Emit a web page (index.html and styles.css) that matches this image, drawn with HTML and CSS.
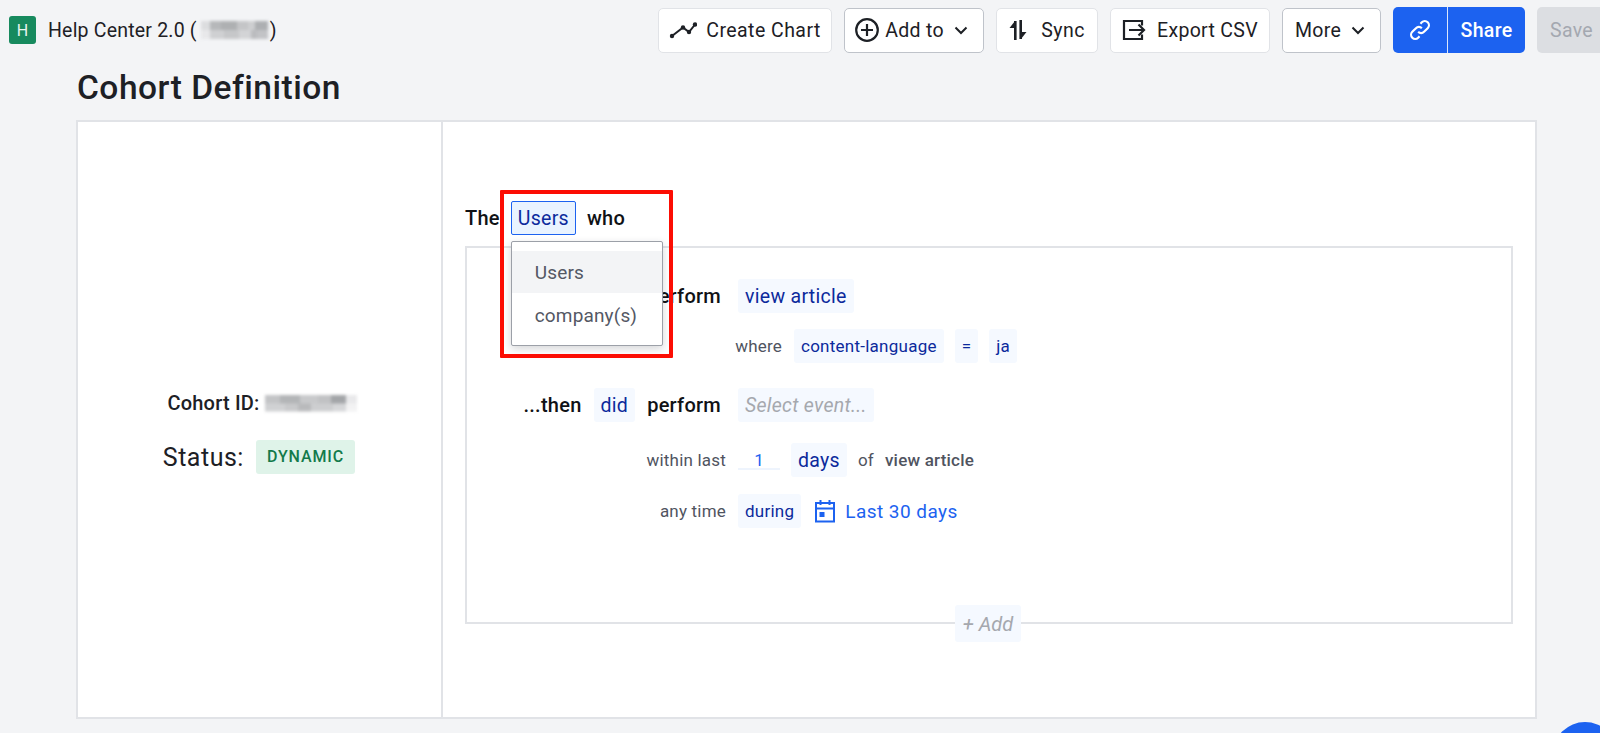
FILE: index.html
```html
<!DOCTYPE html>
<html lang="en">
<head>
<meta charset="utf-8">
<title>Cohort Definition</title>
<link rel="stylesheet" href="styles.css">
</head>
<body>
<header class="topbar">
  <div class="project">
    <span class="logo">H</span>
    <span class="project-name">Help Center 2.0 (<span class="redact redact-a"></span>)</span>
  </div>
  <nav class="actions">
    <button class="btn w-chart"><svg class="ico" viewBox="0 0 28 18"><path d="M3 15 L14 6.5 L20 11 L26 3.5" fill="none" stroke="#1d2025" stroke-width="2"/><circle cx="3" cy="15" r="2.2" fill="#1d2025"/><circle cx="14" cy="6.5" r="2.2" fill="#1d2025"/><circle cx="20" cy="11" r="2.2" fill="#1d2025"/><circle cx="26" cy="3.5" r="2.2" fill="#1d2025"/></svg>Create Chart</button>
    <button class="btn btn-strong w-add"><svg class="ico-plus" viewBox="0 0 24 24"><circle cx="12" cy="12" r="10.8" fill="none" stroke="#1d2025" stroke-width="2.2"/><path d="M12 6v12M6 12h12" stroke="#1d2025" stroke-width="2.2"/></svg>Add to<svg class="chev" viewBox="0 0 14 9"><path d="M1.5 1.5 L7 7 L12.5 1.5" fill="none" stroke="#1d2025" stroke-width="2"/></svg></button>
    <button class="btn w-sync"><svg class="ico-sync" viewBox="0 0 18 20"><path d="M6 1 L0.5 8 H6 Z" fill="#1d2025"/><rect x="5" y="1" width="2.6" height="19" fill="#1d2025"/><rect x="10.4" y="0" width="2.6" height="19" fill="#1d2025"/><path d="M12 19 L17.5 12 H12 Z" fill="#1d2025"/></svg>Sync</button>
    <button class="btn w-export"><svg class="ico-export" viewBox="0 0 24 22"><path d="M20 6.5V2H2V20H20V15.5" fill="none" stroke="#1d2025" stroke-width="2.2"/><path d="M7 11H22M16.5 5.5 L22 11 L16.5 16.5" fill="none" stroke="#1d2025" stroke-width="2.2"/></svg>Export CSV</button>
    <button class="btn btn-strong w-more">More<svg class="chev" viewBox="0 0 14 9"><path d="M1.5 1.5 L7 7 L12.5 1.5" fill="none" stroke="#1d2025" stroke-width="2"/></svg></button>
    <div class="share-group">
      <button class="share-link"><svg class="ico-link" viewBox="0 0 24 24"><path d="M10 14a4.5 4.5 0 0 0 6.4 0l4-4a4.5 4.5 0 0 0-6.4-6.4l-1.5 1.5" fill="none" stroke="#fff" stroke-width="2.4"/><path d="M14 10a4.5 4.5 0 0 0-6.4 0l-4 4a4.5 4.5 0 0 0 6.4 6.4l1.5-1.5" fill="none" stroke="#fff" stroke-width="2.4"/></svg></button>
      <button class="share-text">Share</button>
    </div>
    <button class="btn-save">Save</button>
  </nav>
</header>

<h1 class="page-title">Cohort Definition</h1>

<main class="card">
  <aside class="summary">
    <div class="cohort-id">Cohort ID: <span class="redact redact-b"></span></div>
    <div class="status"><span class="status-label">Status:</span><span class="badge">DYNAMIC</span></div>
  </aside>
  <section class="definition">
    <div class="sentence">
      <span class="strong">The</span>
      <span class="selector">
        <span class="chip chip-open">Users</span>
        <span class="menu">
          <span class="menu-item menu-item-active">Users</span>
          <span class="menu-item">company(s)</span>
        </span>
        <span class="highlight"></span>
      </span>
      <span class="strong">who</span>
    </div>
    <div class="rules">
      <div class="row row-main">
        <div class="lead"><span class="strong">perform</span></div>
        <span class="chip">view article</span>
      </div>
      <div class="row row-sub row-where">
        <div class="lead lead-where"><span class="label">where</span></div>
        <span class="chip chip-sm">content-language</span>
        <span class="chip chip-sm">=</span>
        <span class="chip chip-sm">ja</span>
      </div>
      <div class="row row-main row-then">
        <div class="lead"><span class="strong">...then</span><span class="chip">did</span><span class="strong">perform</span></div>
        <span class="chip chip-placeholder">Select event...</span>
      </div>
      <div class="row row-sub row-within">
        <div class="lead lead-sub"><span class="label">within last</span></div>
        <span class="num-input">1</span>
        <span class="chip">days</span>
        <span class="label">of</span>
        <span class="label label-strong">view article</span>
      </div>
      <div class="row row-sub row-during">
        <div class="lead lead-sub"><span class="label">any time</span></div>
        <span class="chip chip-sm">during</span>
        <span class="date-range"><svg class="ico-cal" viewBox="0 0 22 24"><path d="M2 4H20V22.5H2ZM2 9.5H20M6.5 1V6M15.5 1V6" fill="none" stroke="#1c62f0" stroke-width="2"/><rect x="5.5" y="13" width="5" height="5" fill="#1c62f0"/></svg>Last 30 days</span>
      </div>
      <span class="add-rule">+ Add</span>
    </div>
  </section>
</main>
<div class="help-corner"><span class="help-bubble"></span></div>
</body>
</html>
```

FILE: styles.css
```css
* { box-sizing: border-box; }
html, body { margin: 0; height: 733px; overflow: hidden; }
body {
  background: #f3f4f6;
  color: #1d2025;
  font-family: Roboto, "Noto Sans", "Liberation Sans", sans-serif;
  font-size: 19.5px;
  position: relative;
}
button { font: inherit; color: inherit; cursor: pointer; }

/* top bar */
.topbar { display: flex; align-items: center; height: 60px; padding-left: 9px; }
.project { display: flex; align-items: center; gap: 12px; flex: none; width: 649px; }
.logo {
  width: 27px; height: 28px; border-radius: 3px; background: #178a5e; color: #e8f5ef;
  display: flex; align-items: center; justify-content: center; font-size: 16px;
}
.project-name { letter-spacing: .2px; display: flex; align-items: center; }
.actions { display: flex; align-items: center; gap: 12px; flex: none; }
.btn {
  height: 45px; background: #fff; border: 1px solid #e1e3e7; border-radius: 5px; padding: 0;
  display: flex; align-items: center; justify-content: center; gap: 11px; letter-spacing: .3px; flex: none;
}
.btn-strong { border: 1.5px solid #bfc3ca; }
.w-chart { width: 174px; letter-spacing: .45px; gap: 9px; }
.w-add { width: 140px; gap: 6px; padding-right: 5px; }
.w-sync { width: 102px; gap: 14px; letter-spacing: .45px; }
.w-export { width: 160px; gap: 11px; }
.w-more { width: 99px; gap: 6px; padding-right: 3px; }
.ico { width: 28px; height: 18px; }
.ico-plus { width: 24px; height: 24px; flex: none; }
.ico-sync { width: 18px; height: 20px; }
.ico-export { width: 24px; height: 22px; }
.chev { width: 14px; height: 9px; margin-left: 4px; }
.share-group { display: flex; height: 46px; flex: none; border-radius: 5px; overflow: hidden; background: #1c62f0; }
.share-link { width: 55px; background: none; border: 0; border-right: 1px solid #dbe6fc; padding: 0; display: flex; align-items: center; justify-content: center; }
.ico-link { width: 22px; height: 22px; }
.share-text { width: 77px; background: none; border: 0; color: #fff; font-weight: 500; padding: 0; letter-spacing: .3px; }
.btn-save { width: 63px; height: 46px; flex: none; background: #dcdee2; color: #a4a8b0; border: 0; border-radius: 5px 0 0 5px; text-align: left; padding: 0 0 0 13px; letter-spacing: .3px; }

/* title */
.page-title { margin: 0 0 0 77px; height: 60px; font-size: 33.5px; font-weight: 500; line-height: 56px; letter-spacing: .5px; color: #1d2025; }

/* card */
.card { display: flex; width: 1461px; height: 599px; margin-left: 76px; background: #fff; border: 2px solid #e1e3e7; }
.summary { width: 365px; flex: none; border-right: 2px solid #e1e3e7; display: flex; flex-direction: column; align-items: center; justify-content: center; gap: 25px; padding: 26px 0 0 5px; }
.cohort-id { font-size: 20px; font-weight: 500; display: flex; align-items: center; gap: 5px; letter-spacing: .2px; }
.status { display: flex; align-items: center; gap: 12px; margin-right: 6px; }
.status-label { font-size: 25px; letter-spacing: .5px; }
.badge { background: #dff3e9; color: #137a4b; font-size: 16px; font-weight: 500; padding: 0 11px; height: 34px; line-height: 34px; border-radius: 3px; letter-spacing: .9px; }

.redact { display: inline-block; filter: blur(1.5px); background-repeat: no-repeat; background-size: 100% 50%; background-position: top, bottom; }
.redact-a {
  width: 67px; height: 18px; margin: 0 2px 0 4px;
  background-image:
    linear-gradient(90deg, #dcdddf 0 14%, #b6b8ba 14% 30%, #aeb0b2 30% 54%, #c4c5c7 54% 70%, #cdced0 70% 80%, #adafb2 80% 100%),
    linear-gradient(90deg, #e8e8ea 0 14%, #cfd0d2 14% 34%, #c6c7c9 34% 56%, #d3d4d6 56% 74%, #bbbcbf 74% 84%, #c2c3c6 84% 100%);
}
.redact-b {
  width: 92px; height: 17px;
  background-image:
    linear-gradient(90deg, #c3c4c6 0 16%, #b3b5b7 16% 38%, #c8c9cb 38% 58%, #c1c2c4 58% 72%, #a3a5a8 72% 88%, #e9e9eb 88% 100%),
    linear-gradient(90deg, #d0d1d3 0 22%, #c8c9cb 22% 36%, #b9babc 36% 50%, #cdced0 50% 74%, #d6d7d9 74% 88%, #f2f2f3 88% 100%);
}

/* definition */
.definition { flex: 1; padding: 78px 22px 0 22px; }
.sentence { display: flex; align-items: center; height: 36px; font-size: 20px; }
.strong { font-weight: 500; color: #101216; font-size: 20px; letter-spacing: .25px; }
.selector { position: relative; display: flex; margin: 0 11px 0 11px; }
.chip {
  display: inline-flex; align-items: center; height: 34px; padding: 0 7px; background: #f5f9ff; color: #0c2a9c;
  border-radius: 3px; font-size: 19.5px; letter-spacing: .3px; flex: none;
}
.chip-open { background: #e9f3ff; border: 1px solid #1c62f0; border-radius: 2px; padding: 0 6px; }
.chip-sm { font-size: 17px; letter-spacing: .25px; }
.chip-placeholder { color: #a5a8ae; font-style: italic; }
.menu {
  position: absolute; left: 0; top: 40px; z-index: 2; width: 152px; height: 105px; background: #fff;
  border: 1px solid #9ca0a8; border-radius: 2px; box-shadow: 0 3px 8px rgba(30, 35, 45, .18);
  padding-top: 9px; display: block;
}
.menu-item { display: block; height: 42px; line-height: 44px; padding-left: 23px; color: #545864; font-size: 19px; letter-spacing: .15px; }
.menu-item + .menu-item { padding-top: 1px; }
.menu-item-active { background: #f3f4f6; }
.highlight { position: absolute; z-index: 3; left: -11px; top: -11px; width: 173px; height: 168px; border: 4px solid #fc0d03; border-radius: 1px; pointer-events: none; }

.rules { position: relative; height: 378px; margin-top: 10px; border: 2px solid #e1e3e7; padding-top: 31px; }
.row { display: flex; align-items: center; gap: 11px; height: 34px; }
.lead { width: 254px; flex: none; display: flex; align-items: center; justify-content: flex-end; gap: 12px; margin-right: 6px; }
.lead-sub { width: 259px; margin-right: 1px; }
.lead-where { width: 315px; margin-right: 1px; }
.label { font-size: 17px; color: #50545f; letter-spacing: .2px; }
.label-strong { font-weight: 500; }
.row-where { margin-top: 16px; }
.row-then { margin-top: 25px; }
.row-within { margin-top: 21px; }
.row-during { margin-top: 17px; }
.num-input { width: 42px; height: 27px; align-self: flex-start; line-height: 34px; text-align: center; color: #1c62f0; font-size: 17px; border-bottom: 2px solid #eef4fd; }
.date-range { display: flex; align-items: center; gap: 9px; color: #1c62f0; font-size: 19px; letter-spacing: .45px; margin-left: 2px; }
.ico-cal { width: 22px; height: 24px; }
.add-rule {
  position: absolute; left: 488px; bottom: -20px; width: 66px; height: 37px; background: #f5f9ff; color: #a5a8ae;
  font-style: italic; font-size: 20px; display: flex; align-items: center; justify-content: center; border-radius: 3px;
}
.help-corner { position: absolute; right: 0; bottom: 0; width: 47px; height: 11px; overflow: hidden; }
.help-bubble { display: block; width: 64px; height: 64px; border-radius: 50%; background: #1c62f0; }
```
